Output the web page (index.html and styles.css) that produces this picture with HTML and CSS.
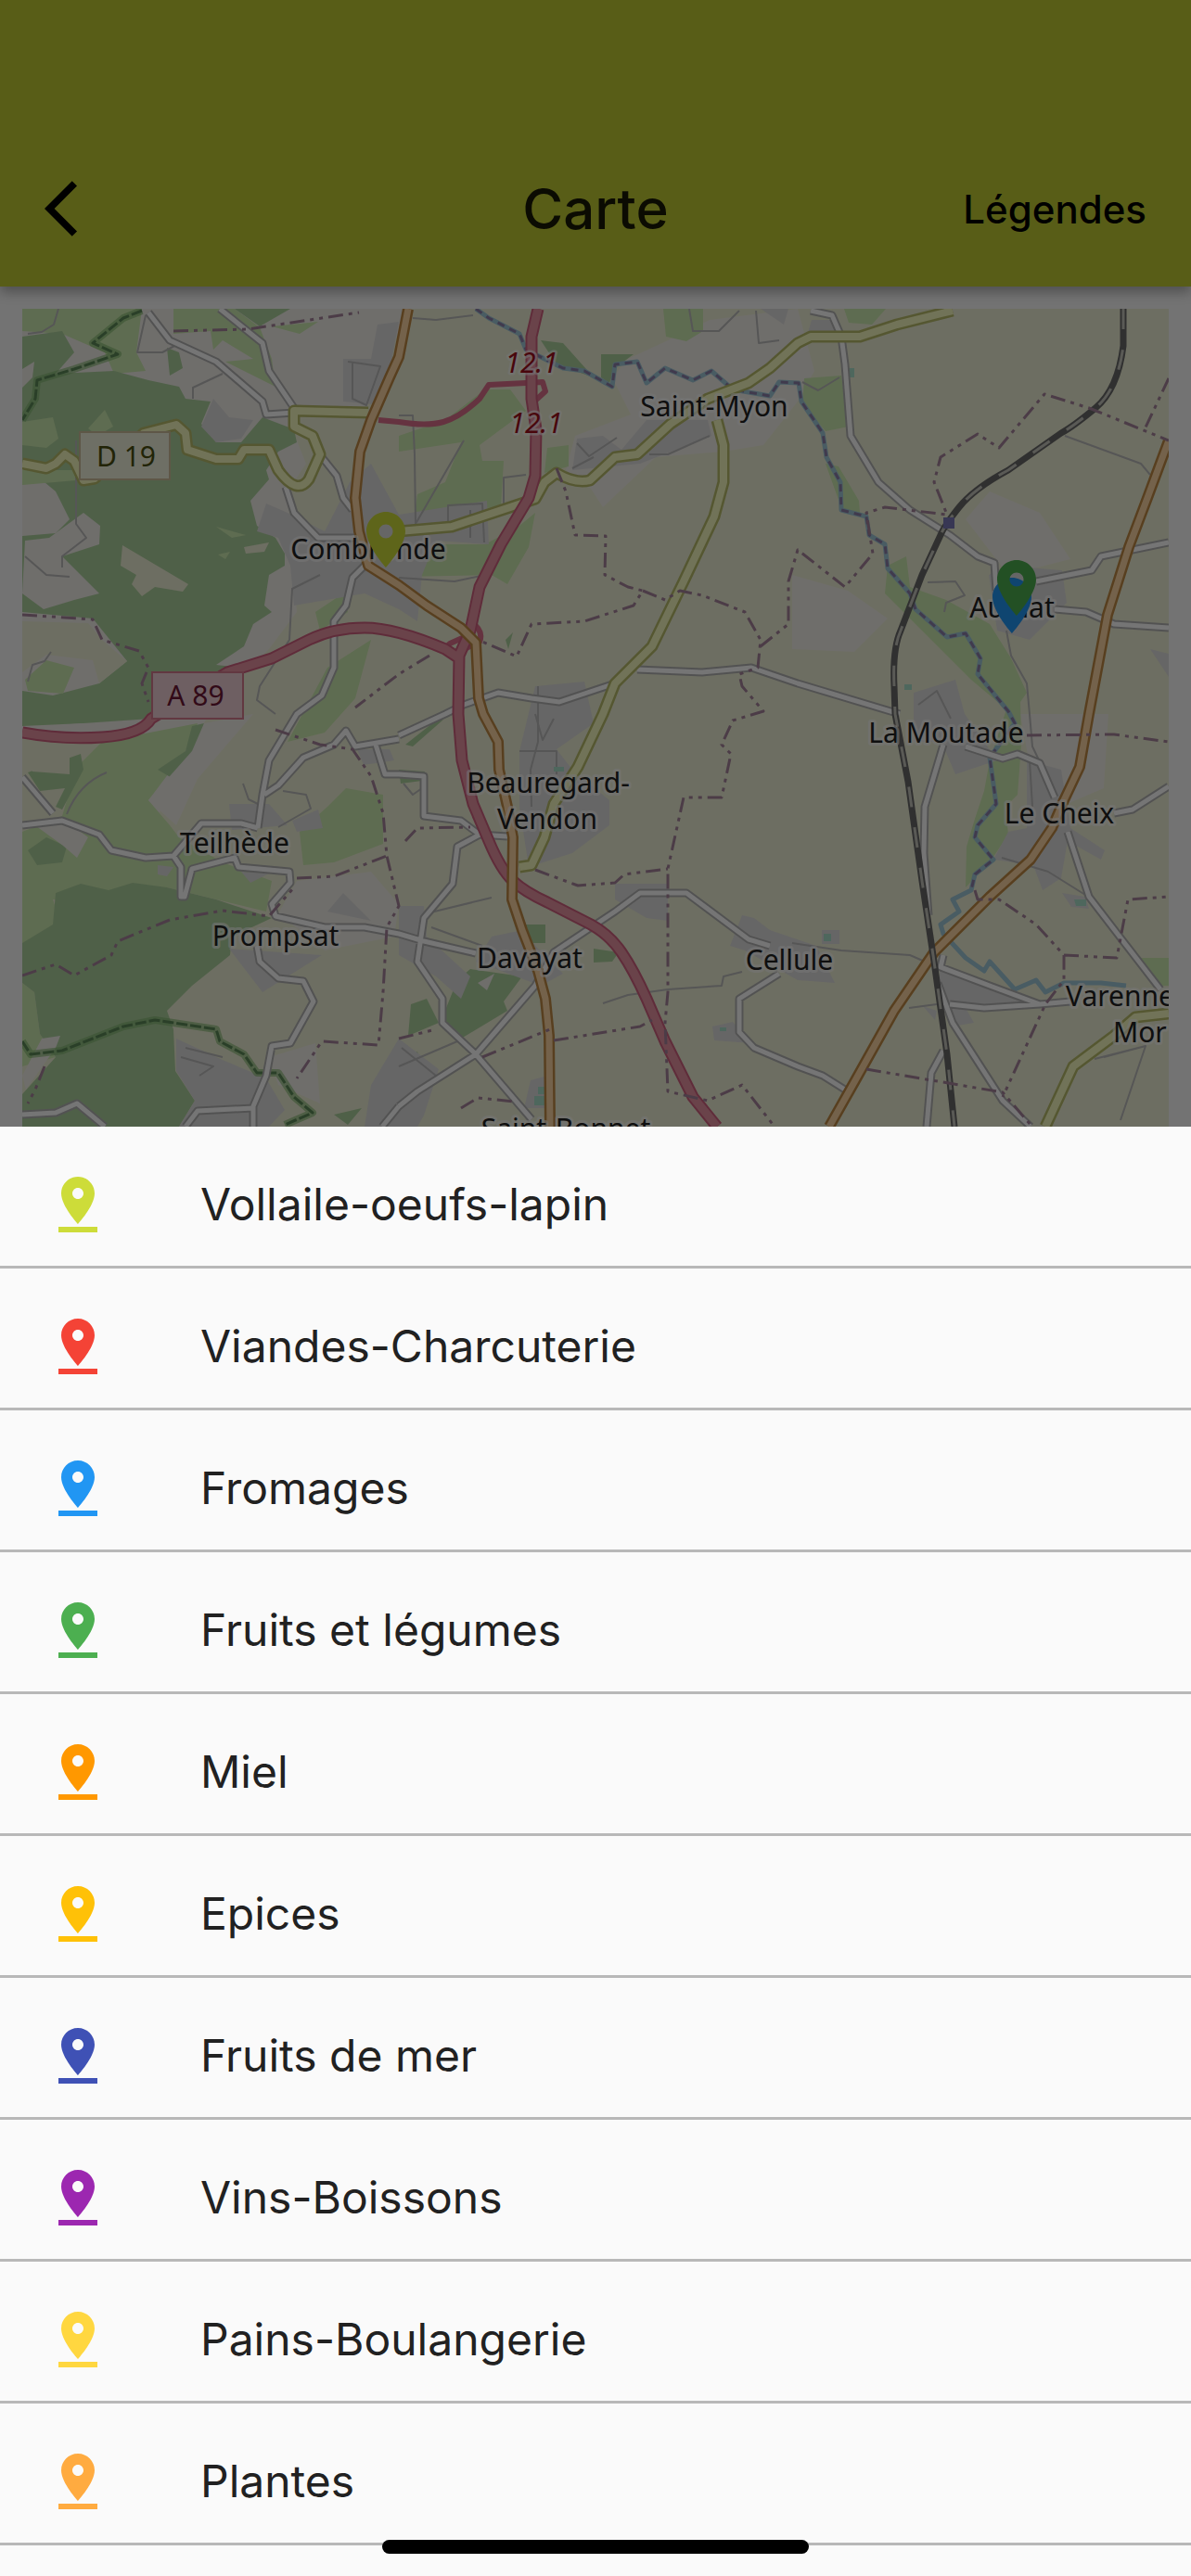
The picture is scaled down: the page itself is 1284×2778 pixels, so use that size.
FILE: index.html
```html
<!DOCTYPE html>
<html lang="fr">

<head>
    <meta charset="UTF-8">
    <meta name="viewport" content="width=device-width, initial-scale=1.0">
    <title>Carte</title>
    <link rel="stylesheet" href="styles.css">
</head>

<body>
    <svg class="symbols" aria-hidden="true">
        <symbol id="pin-drop" viewBox="0 0 24 24">
            <path d="M18 8c0-3.31-2.69-6-6-6S6 4.69 6 8c0 4.5 6 11 6 11s6-6.5 6-11zm-8 0c0-1.1.9-2 2-2s2 .9 2 2-.89 2-2 2c-1.1 0-2-.9-2-2zM5 20v2h14v-2H5z" />
        </symbol>
        <symbol id="pin" viewBox="0 0 24 24">
            <path d="M12 2C8.13 2 5 5.13 5 9c0 5.25 7 13 7 13s7-7.75 7-13c0-3.87-3.13-7-7-7zm0 9.5c-1.38 0-2.5-1.12-2.5-2.5s1.12-2.5 2.5-2.5 2.5 1.12 2.5 2.5-1.12 2.5-2.5 2.5z" />
        </symbol>
    </svg>

    <div class="screen">
        <header class="appbar">
            <button class="back" aria-label="Retour">
                <svg viewBox="0 0 24 24"><path d="M11.67 3.87L9.9 2.1 0 12l9.9 9.9 1.77-1.77L3.54 12z" /></svg>
            </button>
            <h1>Carte</h1>
            <button class="legend-button">Légendes</button>
        </header>

        <main class="map-area">
            <svg class="map" viewBox="24 333 1236 882" preserveAspectRatio="xMidYMin slice">
                <rect class="farmland" x="24" y="333" width="1236" height="882" />

                <!-- terrain -->
                <g class="ground">
                    <path d="M150 333H440L395 440 310 450 330 500 310 530 320 660 290 700 230 760 170 880 110 800 24 780V333z" />
                    <path d="M677 387L720 367 765 345 860 333 878 400 860 433 823 480 780 487 707 493 650 547 637 527 610 507 620 470 680 447 660 407z" />
                    <path d="M1067 530L1121 553 1154 603 1087 620 1041 560zM854 620L914 637 957 667 921 703 854 700zM1100 770H1195L1190 850 1120 880z" />
                    <path d="M320 950L400 940 430 975 425 1010 350 1025 300 985zM290 1140L340 1125 345 1190 300 1170z" />
                </g>
                <g class="grass">
                    <path d="M24 333H153L147 380 157 400 123 403 113 380 67 360 24 357z" />
                    <path d="M187 333H253L280 353 293 387 297 417 283 410 243 390 273 387 240 367 230 377 227 357 187 360zM293 352L343 347 323 360z" />
                    <path d="M523 420H550L567 443 517 480 520 497 543 497 540 547 447 553 450 533 480 520 497 477 430 487 430 470 480 453z" />
                    <path d="M470 587H523L560 567 577 553 570 590 547 630 530 620 430 622 430 605z" />
                    <path d="M715 333H758V357L740 368 718 363zM590 483L613 480V503L587 510zM910 333H955L940 350 915 348z" />
                    <path d="M867 408L907 405 915 460 890 465 865 435zM890 500L904 503 926 540 927 553 908 550z" />
                    <path d="M957 610L977 600 981 633 1020 647 1067 673 1090 710 1107 747 1100 757 1101 803 1097 857 1084 870 1087 900 1067 930 1041 957 1042 913 1051 883 1061 853 1067 820 1085 765 1047 733 981 667 954 640z" />
                    <path d="M110 800L213 780 200 810 160 863 183 890 193 903 240 930 293 950 287 983 180 957 127 970 57 970 73 1020H24V897L67 880 83 827z" />
                    <path d="M323 897L353 870 373 850 413 857V910L360 930 327 933zM353 720L400 690 383 753 350 790 310 800zM340 660L370 640 375 660 345 680z" />
                    <path d="M1227 1033H1260V1063H1247zM24 1060L37 1070 43 1115 60 1140 24 1150z" />
                </g>
                <g class="forest">
                    <path d="M24 363L67 357 80 380 60 403 123 400 160 410 193 417 200 430 227 433 217 457 233 477 260 477 283 450 317 463 320 477 300 487 287 507 290 517 270 540 277 567 297 580 307 597 307 610 290 620 285 653 293 660 273 673 263 697 233 717 260 720 247 726 163 775 90 780 24 785V745L57 750 107 737 137 713 100 667 24 660V578L60 575 75 560 60 530 24 500z" />
                    <path d="M253 333H313L280 352zM180 375L193 380 197 397 183 405zM583 367L607 370 640 407 600 393zM648 382H683L663 397 657 413 648 407z" />
                    <path d="M60 963L87 953 117 960 143 952 180 957 233 970 293 990 250 1010 248 1030 207 1063 180 1090 187 1110 189 1155 210 1187 193 1215H24V1180L60 1140 43 1115 37 1070 24 1060V1017L57 997z" />
                    <path d="M207 783L220 780 213 810 187 840 170 830 200 810zM30 917L50 903 72 913 67 930 40 933zM30 833L87 813 90 830 67 873 60 870 70 850 43 853z" />
                    <path d="M493 1057L507 1045 563 1053 543 1080 547 1090 497 1120 477 1097zM443 1083L460 1077 473 1103 440 1117zM563 997H588V1017H573zM640 1023L667 1027 660 1037 640 1038zM360 1202L390 1195 375 1213z" />
                    <path d="M437 803L470 777 478 776 445 805zM430 830L458 832 455 842 432 845zM545 690L553 682 548 700zM325 608L340 606 335 615 322 616zM440 1142L450 1134 454 1150 442 1152z" />
                </g>
                <g class="grass">
                    <path d="M24 455L57 450 63 473 50 483 24 480zM24 507H82V518L24 523zM95 462L113 442 122 460 105 470zM27 733L50 712 80 720 68 748 30 745zM233 568L265 577 250 580zM235 598L248 595 243 603z" />
                </g>
                <g class="farmland">
                    <path d="M24 670L95 672 110 690 137 713 107 737 100 712 50 706 24 725zM132 588L203 630 197 638 167 633 153 643 142 630 147 620 130 610zM263 590L290 585 285 595 265 597zM24 805L75 812 75 835 35 832z" />
                </g>
                <g class="ground">
                    <path d="M27 583L53 580 90 553 108 567 107 587 67 600 107 640 80 647 47 657 24 640zM24 398L37 390 35 407 24 418zM160 388L178 387 182 403 165 408zM24 783L90 780 88 788 24 790zM35 888L70 885 95 903 83 925 68 912zM160 863L207 810 220 780 273 770 213 840 190 890zM515 1060L533 1050 525 1068zM45 1120L65 1117 60 1130 28 1175 24 1160z" />
                </g>
                <g class="built">
                    <path d="M230 430L247 450 273 453 260 473 233 477 217 460z" />
                    <path d="M407 350L430 347 413 437 370 433 370 387 400 387z" />
                    <path d="M287 543L310 553 350 573 377 520 400 500 430 555 525 540 527 587 470 583 455 620 450 670 430 657 393 640 317 653 313 610 300 580 277 573z" />
                    <path d="M697 453H763L767 470 690 500 617 507 622 473 650 470 670 485zM820 333H850L845 350zM875 345L900 345 905 360 870 362z" />
                    <path d="M1107 820L1144 830 1154 893 1191 917 1187 927 1151 907 1144 947 1124 960 1114 933 1071 927 1087 897 1107 893z" />
                    <path d="M1066 620L1085 610 1145 615 1150 650 1110 690 1075 680zM985 747L1030 733 1040 770 1075 820 1030 835 1015 800 985 800zM1240 700L1260 705V730z" />
                    <path d="M1014 1043L1061 1060 1121 1080 1041 1087 1050 1103 1027 1107 1010 1070zM995 1085L1010 1090 1008 1100zM1145 963L1170 967 1174 980 1155 978zM886 1003H905V1018H886z" />
                    <path d="M800 987L813 990 830 1003 880 1020 900 1060 860 1057 803 1025 787 1020zM768 1107L790 1102 810 1125 770 1122z" />
                    <path d="M577 740L630 735 640 780 600 808 617 830 657 863 657 890 617 920 570 935 560 870 560 810z" />
                    <path d="M663 953H720V993L697 990 663 970zM530 1010L563 1003 580 1023 607 1050 583 1063 513 1037z" />
                    <path d="M430 977H457L460 1010 507 1053 497 1077 470 1053 430 1030zM430 1120L473 1153 457 1203 450 1215H393L400 1170zM572 1165L590 1160V1195H565z" />
                    <path d="M190 1120L240 1143 287 1163 307 1197 290 1215H193L210 1187 190 1155zM353 983L370 963 400 993zM247 1023L347 1030 283 1070z" />
                    <path d="M247 867L290 867 310 890 250 895zM315 885L343 873 348 893 320 897zM170 933L187 935 180 945 170 943zM385 808L420 808 425 820 392 825zM260 940L290 942 270 952z" />
                </g>

                <!-- tracks -->
                <path class="track" d="M63 333L58 350 45 358 30 360M157 340L148 380 175 380 190 372M208 430L208 418 240 403M380 390L380 430 395 437 410 395 375 390M82 475L82 565 93 580 67 600 67 612M27 600L50 620 75 622M345 620L315 635 312 690 280 740 277 755 297 770M30 735L35 717 48 713 55 703M72 878Q85 845 115 833M262 845L268 862 278 867M305 853L330 857 335 872 300 892" />
                <path class="track" d="M445 343L470 345 510 340M430 448H445L447 490 448 565 500 475M543 545V515L567 512M483 565V545L520 543 522 585M507 550V580M622 478L635 492 665 472M640 493L617 505M700 490H720L765 470M743 333L747 357 775 357 797 335M815 335L818 370 840 367M430 623L490 627 523 620" />
                <path class="track" d="M865 412L882 421 905 407M1148 470L1230 500 1240 512M1000 628L1030 627 1040 642 1020 650 1018 660M1085 680L1090 707 1107 737 1110 770 1113 805 1125 830M1110 820L1113 870M1080 925L1130 940 1170 965M990 760L1010 745 1025 775M650 1082L677 1073 720 1067 778 1063 780 1053 800 1048M460 985L530 968M465 1000L520 1020M430 1150L500 1120M580 740V800L572 830 573 870M1180 1142L1235 1128 1208 1208M1190 1140L1235 1128M433 1130L470 1160M195 1140L230 1150 215 1160M200 1130L240 1140" />
                <path class="track" d="M854 1017L907 1025 981 1030 997 1037M980 1087L1010 1083M560 810H600V835M577 770L585 798 597 775M435 845L445 857 455 850" />

                <!-- water -->
                <path class="pond" d="M597 827H608V832H597zM580 1172H587V1180H580zM576 1182H587V1192H576zM888 1007H896V1015H888zM1158 970H1171V977H1160zM776 1108H783V1112H776zM915 397H921V407H915zM975 738H983V744H975z" />
                <path class="river" id="river" d="M513 333L527 343 560 360 567 377 607 397 630 400 660 417 663 393 687 390 697 413 717 397 747 410 767 400 790 420 830 427 840 412 861 413 864 433 887 467 891 493 906 520 907 550 934 557 937 577 954 587 957 613 981 640 987 657 1021 687 1041 683 1057 710 1054 727 1087 767 1094 780 1067 817 1074 867 1054 890 1051 903 1071 927 1051 943 1047 960 1027 970 1034 983 1014 997 1017 1007 1041 1033 1061 1047 1067 1037 1094 1067 1117 1057 1127 1070 1147 1060 1187 1060 1214 1063" />
                <path class="river-border" d="M513 333L527 343 560 360 567 377 607 397 630 400 660 417 663 393 687 390 697 413 717 397 747 410 767 400 790 420 830 427 840 412 861 413 864 433 887 467 891 493 906 520 907 550 934 557 937 577 954 587 957 613 981 640 987 657 1021 687 1041 683 1057 710 1054 727 1087 767 1094 780 1067 817 1074 867 1054 890 1051 903 1071 927 1051 943 1047 960" />

                <!-- park limits -->
                <g id="park">
                    <path class="park-band" d="M153 335L133 343 100 370 127 382 80 398 40 410 38 430 24 453M24 1123L33 1137 67 1133 133 1107 167 1100 233 1110 237 1123 263 1137 277 1157 300 1157 317 1183 337 1200 307 1213" />
                    <path class="park-line" d="M153 335L133 343 100 370 127 382 80 398 40 410 38 430 24 453M24 1123L33 1137 67 1133 133 1107 167 1100 233 1110 237 1123 263 1137 277 1157 300 1157 317 1183 337 1200 307 1213" />
                </g>

                <!-- roads -->
                <defs>
                    <path id="minor" d="M160 337L183 367 233 390 283 433 287 447 317 445M237 333L283 370 290 400 317 440M347 493L363 513 370 537 380 550M308 525L317 553 343 580 393 580M393 610L380 623 373 653 360 670 360 720 347 750 320 770 290 820 283 857 278 893M430 797L383 805 373 788 360 803 327 817 300 847 285 857M405 803L415 835 430 835 457 837 457 880 497 885 517 900 547 902M430 793L480 770 500 760 537 747 573 753 603 757 663 737M687 722L757 725 810 720 860 737 970 770M24 838L57 877M24 890L67 885 107 900 120 917 157 925 187 923 217 888 260 888 278 893M187 923L195 935 195 967H199L207 937 253 925 257 935 312 940 313 952 293 975 297 988 350 1000 393 1000 430 1007 457 1015 513 1028M277 1020L280 1037 300 1055 327 1058 338 1080 313 1125 293 1128 287 1160 273 1193V1215M200 1215L213 1198 273 1195M24 1202L60 1200 83 1190 113 1215M517 900L493 913 488 953 457 990 450 1037 477 1077 477 1103 513 1137 573 1207M430 1193L450 1177 513 1137 577 1063 597 1027 663 983 690 963 740 963 807 1013 830 1020M840 1050L797 1077 797 1113 813 1130 860 1150 887 1160 914 1177M874 335L897 340 907 363 911 393 917 470 947 520 981 550 1024 577 1054 600 1072 607 1074 637M1117 627L1177 615 1187 600 1260 585M1137 657L1171 660 1201 673 1260 677M1017 803L997 870 996 920 1001 987M1041 805L1081 818 1097 813 1121 823 1137 860M1201 877L1221 873 1260 848M1151 897L1174 967 1207 1010 1251 1067M1017 1030L1014 1043 1067 1063 1121 1083 1154 1080M1024 1083L1061 1087 1121 1083M1011 1060L1027 1103 1081 1187 1111 1215M1017 1133L1004 1157 999 1215M412 1215L430 1193" />
                    <path id="secondary" d="M24 500L50 505 60 500 70 490 80 497 90 518 102 516 155 467 190 458 200 467 202 485 233 495 257 495 263 485 290 485 300 507Q320 535 333 517L345 490 337 470 317 460 317 443 397 445M430 573L487 568 577 538 587 520 600 510Q620 522 636 518L663 493 687 490 723 457 763 430 807 413 830 397 860 370 874 363 927 363 967 350 1027 335M773 453L780 480V520L770 557 737 627 703 697 663 737 650 770 623 827 597 867 587 903 573 933 560 935M1260 1093L1224 1097 1201 1117 1157 1150 1127 1215" />
                    <path id="primary" d="M440 333L430 385 420 407 400 453 388 487 383 537 387 573 397 610 430 631 460 653 497 677 513 693 516 753 521 770 537 800 538 830 547 870 553 903 552 970 563 1003 580 1047 588 1077 592 1117 593 1215M1260 475L1237 537 1217 590 1194 663 1174 770 1164 827 1147 863 1134 893 1111 927 1067 967 1007 1027 964 1090 921 1167 894 1215" />
                    <path id="ramp" d="M408 453L430 455Q460 460 478 455T517 430L527 415 567 413 585 412 588 422 577 432M507 670Q522 680 517 692L490 705Q478 700 485 694L505 685" />
                    <path id="motorway" d="M580 333L573 363V430L578 463 577 513 570 537 540 587 517 633 507 680 495 707 494 770 498 820 510 867 527 907Q540 938 553 950T590 973L637 997Q657 1008 670 1027T697 1077L717 1123 747 1183 773 1215M24 790Q67 798 110 795T163 775L245 725 293 710 333 690Q360 677 393 677T480 700L495 710" />
                    <path id="rail" d="M1211 333L1211 373Q1205 420 1181 440T1144 467L1087 507Q1050 527 1034 547T1014 577L994 620 971 680Q962 700 964 740L965 770 979 843 994 950 1007 1037 1021 1137 1029 1215" />
                </defs>
                <use href="#minor" class="minor-edge" />
                <use href="#minor" class="minor" />
                <use href="#secondary" class="secondary-edge" />
                <use href="#secondary" class="secondary" />
                <use href="#ramp" class="ramp" />
                <use href="#motorway" class="motorway-edge" />
                <use href="#motorway" class="motorway" />
                <use href="#primary" class="primary-edge" />
                <use href="#primary" class="primary" />
                <use href="#rail" class="rail" />
                <use href="#rail" class="rail-dash" />
                <rect class="station" x="1017" y="558" width="12" height="12" />

                <!-- communes -->
                <g class="border">
                    <path d="M600 505L610 530 620 577 653 578 652 620 677 633 693 637 683 653 630 670 573 673 557 708 520 692" />
                    <path d="M693 637L717 647 733 637 757 642 803 660 820 690 817 720 797 727 800 740 823 767 790 777 778 803 788 813 778 860 737 860 720 937V1070L717 1103 720 1177 763 1187 800 1170 835 1215" />
                    <path d="M577 938L623 955 663 952 673 943 720 937" />
                    <path d="M820 697L850 673V627L860 593 911 633 941 597 934 553 954 547 1021 555 1007 520 1014 493 1054 468 1077 483 1126 425 1174 440 1260 475M1260 408L1234 463" />
                    <path d="M1107 793L1201 792 1260 800M1051 960L1054 970 1077 970 1117 997 1147 1030 1147 1057 1127 1083 1081 1183M1147 1030L1204 1033 1216 970 1260 967M934 1153L1081 1178 1111 1213" />
                    <path d="M297 787L345 803 380 808 400 837 413 877 417 923 430 977 417 1000 413 1070 408 1127 347 1123 320 1163M320 947L360 945 417 923" />
                    <path d="M24 1052L60 1040 80 1052 120 1030 127 1015 183 992 240 982 290 988 317 957M187 357L267 355 387 337M24 663L100 668 110 690 150 702 160 720 153 737 160 757" />
                    <path d="M463 707L430 727 383 763M520 1140L593 1110M597 1122L690 1107 703 1100M437 907L450 893 507 892M430 1120L470 1110M497 1195L515 1184 555 1188M48 1150L38 1175 30 1190" />
                </g>

                <!-- road numbers -->
                <rect class="shield-d" x="86" y="466" width="97" height="51" />
                <text class="number-d" x="136" y="503">D 19</text>
                <rect class="shield-a" x="164" y="725" width="98" height="50" />
                <text class="number-a" x="211" y="761">A 89</text>
                <text class="exit" x="573" y="402">12.1</text>
                <text class="exit" x="578" y="467">12.1</text>

                <!-- towns -->
                <g class="town">
                    <text x="770" y="449">Saint-Myon</text>
                    <text x="397" y="603">Combronde</text>
                    <text x="1091" y="666">Aubiat</text>
                    <text x="1020" y="801">La Moutade</text>
                    <text x="1142" y="888">Le Cheix</text>
                    <text x="591" y="855">Beauregard-</text>
                    <text x="590" y="894">Vendon</text>
                    <text x="253" y="920">Teilhède</text>
                    <text x="297" y="1020">Prompsat</text>
                    <text x="571" y="1044">Davayat</text>
                    <text x="851" y="1046">Cellule</text>
                    <text x="610" y="1228">Saint-Bonnet</text>
                    <text class="cut" x="1149" y="1085">Varenne</text>
                    <text class="cut" x="1200" y="1124">Mor</text>
                </g>

                <use href="#pin" class="lime" x="380" y="546" width="72" height="72" />
                <use href="#pin" class="blue" x="1055" y="617" width="72" height="72" />
                <use href="#pin" class="green" x="1060" y="598" width="72" height="72" />
            </svg>
        </main>
        <div class="scrim"></div>
    </div>

    <ul class="sheet">
        <li><svg class="lime"><use href="#pin-drop" /></svg>Vollaile-oeufs-lapin</li>
        <li><svg class="red"><use href="#pin-drop" /></svg>Viandes-Charcuterie</li>
        <li><svg class="blue"><use href="#pin-drop" /></svg>Fromages</li>
        <li><svg class="green"><use href="#pin-drop" /></svg>Fruits et légumes</li>
        <li><svg class="orange"><use href="#pin-drop" /></svg>Miel</li>
        <li><svg class="amber"><use href="#pin-drop" /></svg>Epices</li>
        <li><svg class="indigo"><use href="#pin-drop" /></svg>Fruits de mer</li>
        <li><svg class="purple"><use href="#pin-drop" /></svg>Vins-Boissons</li>
        <li><svg class="yellow"><use href="#pin-drop" /></svg>Pains-Boulangerie</li>
        <li><svg class="light-orange"><use href="#pin-drop" /></svg>Plantes</li>
    </ul>
    <div class="home-indicator"></div>
</body>

</html>
```
FILE: styles.css
```css
* {
    box-sizing: border-box;
}

body {
    position: relative;
    display: flex;
    flex-direction: column;
    min-height: 100vh;
    margin: 0;
    background: #fafafa;
    color: #212121;
    font-family: Inter, Roboto, sans-serif;
}

.symbols {
    position: absolute;
    width: 0;
    height: 0;
}

.screen {
    position: relative;
    display: flex;
    flex: 1;
    flex-direction: column;
}

.scrim {
    position: absolute;
    inset: 0;
    background: rgba(0, 0, 0, 0.54);
}

/* app bar */
.appbar {
    display: grid;
    grid-template-columns: 1fr auto 1fr;
    align-items: center;
    padding: 141px 48px 0;
    background: #c0ca33;
    box-shadow: 0 6px 12px rgba(0, 0, 0, 0.3);
    z-index: 0;
}

.appbar h1 {
    margin: 0;
    color: rgba(0, 0, 0, 0.87);
    font-size: 60px;
    font-weight: 500;
    line-height: 168px;
}

.appbar button {
    padding: 0;
    border: 0;
    background: none;
    color: #000;
    font-family: inherit;
    cursor: pointer;
}

.back {
    justify-self: start;
}

.back svg {
    display: block;
    width: 72px;
    height: 72px;
}

.legend-button {
    justify-self: end;
    font-size: 42px;
    font-weight: 500;
}

/* map */
.map-area {
    display: flex;
    flex: 1;
    flex-direction: column;
    padding: 24px 24px 0;
}

.map {
    flex: 1 1 0;
    width: 100%;
    min-height: 0;
    overflow: hidden;
}

.map path,
.map use {
    stroke-linejoin: round;
}

.farmland {
    fill: #eef0d5;
}

.ground {
    fill: #f2efe9;
}

.grass {
    fill: #cdebb0;
}

.forest {
    fill: #add19e;
}

.built {
    fill: #dfdede;
}

.pond {
    fill: #aae0cb;
}

.map .track,
.map .river,
.map .river-border,
.map .park-band,
.map .park-line,
.border,
.minor-edge,
.minor,
.secondary-edge,
.secondary,
.primary-edge,
.primary,
.motorway-edge,
.motorway,
.ramp,
.rail,
.rail-dash {
    fill: none;
}

.track {
    stroke: #bbb;
    stroke-width: 2;
}

.river {
    stroke: #a0c8d8;
    stroke-width: 5;
}

.river-border {
    stroke: #8d7fa8;
    stroke-width: 3;
    stroke-dasharray: 8 6;
}

.park-band {
    stroke: #7fb56c;
    stroke-width: 8;
    opacity: 0.6;
}

.park-line {
    stroke: #5c8a58;
    stroke-width: 3;
    stroke-dasharray: 12 3;
}

.border {
    stroke: #a5849c;
    stroke-width: 3;
    stroke-dasharray: 16 6 4 6 4 6;
}

.minor-edge {
    stroke: #b4b4b4;
    stroke-width: 9;
}

.minor {
    stroke: #fff;
    stroke-width: 5;
}

.secondary-edge {
    stroke: #b9bd6c;
    stroke-width: 13;
}

.secondary {
    stroke: #f7fabf;
    stroke-width: 8;
}

.primary-edge {
    stroke: #c08a45;
    stroke-width: 12;
}

.primary {
    stroke: #fcd6a4;
    stroke-width: 7;
}

.ramp {
    stroke: #dc6f8b;
    stroke-width: 6;
}

.motorway-edge {
    stroke: #d0607f;
    stroke-width: 13;
}

.motorway {
    stroke: #e892a2;
    stroke-width: 9;
}

.rail {
    stroke: #6a6a6a;
    stroke-width: 7;
}

.rail-dash {
    stroke: #c4c4bc;
    stroke-width: 3;
    stroke-dasharray: 22 22;
}

.station {
    fill: #7b78b8;
}

.map text {
    font-family: "Noto Sans", sans-serif;
    font-size: 30px;
    text-anchor: middle;
    paint-order: stroke;
    stroke-linejoin: round;
}

.town {
    fill: #222;
    stroke: rgba(255, 255, 255, 0.6);
    stroke-width: 6;
}

.town .cut {
    text-anchor: start;
}

.exit {
    fill: #a00f1c;
    stroke: rgba(255, 255, 255, 0.6);
    stroke-width: 5;
    font-style: italic;
}

.shield-d {
    fill: #f0f2dc;
    stroke: #cdbd9c;
    stroke-width: 2;
}

.number-d {
    fill: #4a5010;
}

.shield-a {
    fill: #f0cfd5;
    stroke: #d57b8f;
    stroke-width: 2;
}

.number-a {
    fill: #6d1636;
}

/* legend sheet */
.sheet {
    margin: 0;
    padding: 0 0 33px;
    background: #fafafa;
    list-style: none;
}

.sheet li {
    display: flex;
    gap: 96px;
    padding: 48px 48px 30px;
    border-bottom: 3px solid #b8b8b8;
    font-size: 48px;
    line-height: 72px;
}

.sheet svg {
    flex: none;
    width: 72px;
    height: 72px;
}

.home-indicator {
    position: absolute;
    bottom: 24px;
    left: 50%;
    width: 460px;
    height: 15px;
    margin-left: -230px;
    border-radius: 8px;
    background: #000;
}

/* product colours */
.lime {
    fill: #cddc39;
}

.red {
    fill: #f44336;
}

.blue {
    fill: #2196f3;
}

.green {
    fill: #4caf50;
}

.orange {
    fill: #ff9800;
}

.amber {
    fill: #ffc107;
}

.indigo {
    fill: #3f51b5;
}

.purple {
    fill: #9c27b0;
}

.yellow {
    fill: #ffd740;
}

.light-orange {
    fill: #ffab40;
}
```
